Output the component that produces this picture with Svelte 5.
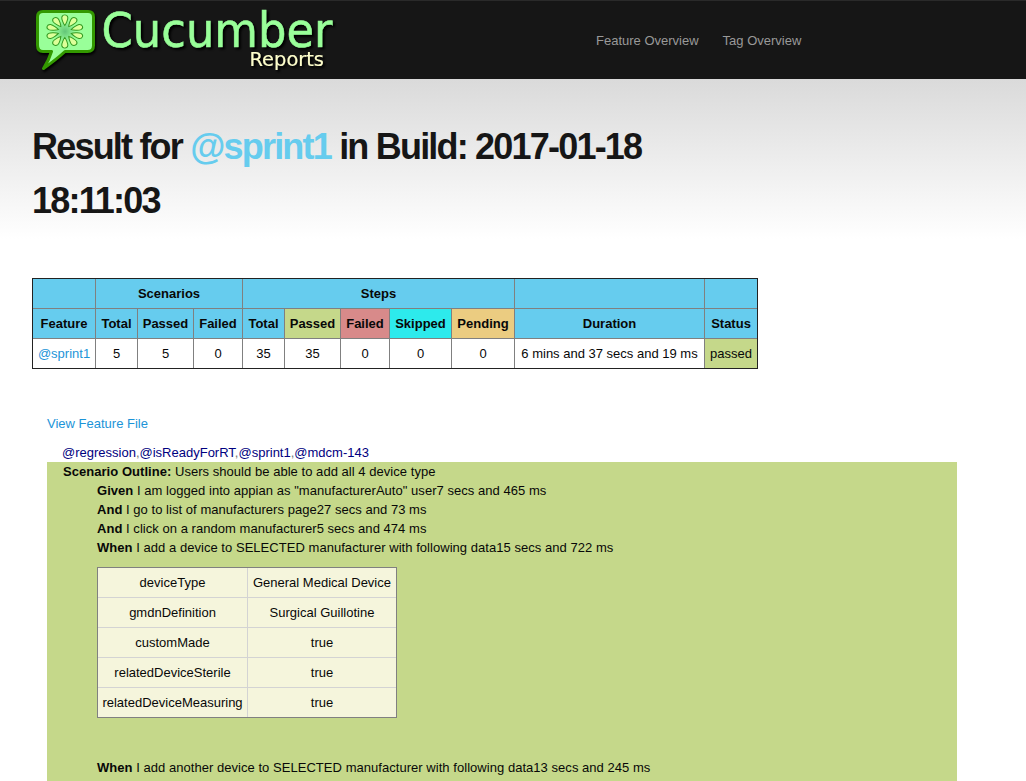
<script>
  const top = [
    { t: '', span: 1 }, { t: 'Scenarios', span: 3 }, { t: 'Steps', span: 5 }, { t: '', span: 1 }, { t: '', span: 1 }
  ];
  const heads = [
    ['Feature', ''], ['Total', ''], ['Passed', ''], ['Failed', ''], ['Total', ''], ['Passed', 'passed'],
    ['Failed', 'failed'], ['Skipped', 'skipped'], ['Pending', 'pending'], ['Duration', ''], ['Status', '']
  ];
  const values = ['5', '5', '0', '35', '35', '0', '0', '0', '6 mins and 37 secs and 19 ms'];
  const steps = [
    ['Given', 'I am logged into appian as "manufacturerAuto" user', '7 secs and 465 ms'],
    ['And', 'I go to list of manufacturers page', '27 secs and 73 ms'],
    ['And', 'I click on a random manufacturer', '5 secs and 474 ms'],
    ['When', 'I add a device to SELECTED manufacturer with following data', '15 secs and 722 ms']
  ];
  const data = [
    ['deviceType', 'General Medical Device'], ['gmdnDefinition', 'Surgical Guillotine'],
    ['customMade', 'true'], ['relatedDeviceSterile', 'true'], ['relatedDeviceMeasuring', 'true']
  ];
  const tags = ['@regression', '@isReadyForRT', '@sprint1', '@mdcm-143'];
  const petals = Array.from({ length: 10 }, (_, i) => i * 36);
</script>

<div class="page">
  <header>
    <svg class="logo" width="320" height="78" viewBox="20 1 320 78" role="img" aria-label="Cucumber Reports">
      <defs>
        <radialGradient id="core"><stop offset="0" stop-color="#63c578" /><stop offset="1" stop-color="#99ff99" /></radialGradient>
      </defs>
      <path class="bubble" d="M43 11.500H88Q93.500 11.500 93.500 17V45.500Q93.500 51.500 87.500 51.500H65Q57 59 43.500 68.500Q49 60 51.500 51.500H43Q37.500 51.500 37.500 45V17Q37.500 11.500 43 11.500Z" />
      <circle cx="65" cy="31.500" r="11" fill="url(#core)" />
      {#each petals as a}
        <path class="petal" transform="translate(64.800 31.500) scale(1.120 1) rotate({a})" d="M0 -6C-1 -7.500 -3 -12 -2.700 -14.200Q-2.200 -16.600 0 -16.600Q2.200 -16.600 2.700 -14.200C3 -12 1 -7.500 0 -6Z" />
      {/each}
      <text class="name" x="101.500" y="46.700" textLength="231" lengthAdjust="spacingAndGlyphs">Cucumber</text>
      <text class="sub" x="249.500" y="65.500" textLength="74.500" lengthAdjust="spacingAndGlyphs">Reports</text>
    </svg>
    <nav><a href="#features">Feature Overview</a><a href="#tags">Tag Overview</a></nav>
  </header>
  <main>
    <h1>Result for <span>@sprint1</span> in Build: 2017-01-18<br />18:11:03</h1>
    <div class="stats">
      {#each top as c}<div class="th" style="grid-column: span {c.span}">{c.t}</div>{/each}
      {#each heads as [t, k]}<div class="th {k}">{t}</div>{/each}
      <div><a href="#sprint1">@sprint1</a></div>
      {#each values as v}<div>{v}</div>{/each}
      <div class="passed">passed</div>
    </div>
    <section>
      <a class="view" href="#file">View Feature File</a>
      <div class="tags">{#each tags as t, i}{#if i}<i>,</i>{/if}{t}{/each}</div>
      <div class="scenario">
        <div><b>Scenario Outline:</b> Users should be able to add all 4 device type</div>
        <div class="steps">
          {#each steps as [k, t, d]}<div><b>{k}</b> {t}{d}</div>{/each}
          <div class="data">
            {#each data as row}{#each row as c}<div>{c}</div>{/each}{/each}
          </div>
          <div><b>When</b> I add another device to SELECTED manufacturer with following data13 secs and 245 ms</div>
        </div>
      </div>
    </section>
  </main>
</div>

<style>
  :global(body) { margin: 0; overflow: hidden; }
  .page { height: 781px; overflow: hidden; font: 13px/19px "Liberation Sans", Arial, sans-serif; color: #080808; background: linear-gradient(#dadada, #fff 160px) 0 79px no-repeat #fff; }
  header { box-sizing: border-box; height: 79px; background: #161616; border-top: 1px solid #2a2a2a; display: flex; padding-left: 20px; }
  .logo { flex: none; display: block; overflow: visible; }
  .bubble { fill: #99ff99; stroke: #339900; stroke-width: 3; stroke-linejoin: round; filter: drop-shadow(1px 2px 1px #000); }
  .petal { fill: #ddff99; stroke: #339922; stroke-width: 0.9; }
  .name, .sub { font-family: "DejaVu Sans", sans-serif; filter: drop-shadow(2px 2px 1px #000); }
  .name { font-size: 48.5px; fill: #99ff99; stroke: #99ff99; stroke-width: 0.6; }
  .sub { font-size: 19.5px; fill: #ffffcc; stroke: #ffffcc; stroke-width: 0.2; }
  nav { display: flex; gap: 24px; padding: 30px 0 0 256px; }
  nav a { color: #999; }
  a { color: #1c94d8; text-decoration: none; white-space: nowrap; }
  main { padding: 41px 32px 0; }
  h1 { margin: 0; font-size: 36px; line-height: 54px; letter-spacing: -1.8px; color: #161616; white-space: nowrap; }
  h1 span { color: #66ccee; }
  .stats { margin-top: 50px; width: 724px; border: 1px solid #222; background: #808080; display: grid; gap: 1px; grid-template-columns: 62px 41px 55px 48px 41px 55px 48px 61px 62px 189px 52px; grid-auto-rows: 29px; }
  .stats > div, .data > div { display: flex; justify-content: center; align-items: center; white-space: nowrap; background: #fff; }
  .stats > .th { font-weight: bold; background: #66ccee; }
  .stats > .passed { background: #c5d88a; }
  .stats > .failed { background: #d88a8a; }
  .stats > .skipped { background: #2deaec; }
  .stats > .pending { background: #ebcc81; }
  section { margin: 45px 0 0 15px; width: 910px; }
  .view { display: block; }
  .tags { margin-top: 10px; padding-left: 15px; color: #000080; }
  .tags i { font-style: normal; color: #777; }
  .scenario { background: #c5d88a; height: 330px; padding-left: 16px; white-space: nowrap; letter-spacing: 0.04px; }
  .steps { padding-left: 34px; }
  .data { margin: 10px 0 40px; width: 298px; border: 1px solid #808080; background: #d3d3d3; display: grid; gap: 1px; grid-template-columns: 149px 148px; grid-auto-rows: 29px; letter-spacing: 0; }
  .data > div { background: #f5f5dc; }
</style>
